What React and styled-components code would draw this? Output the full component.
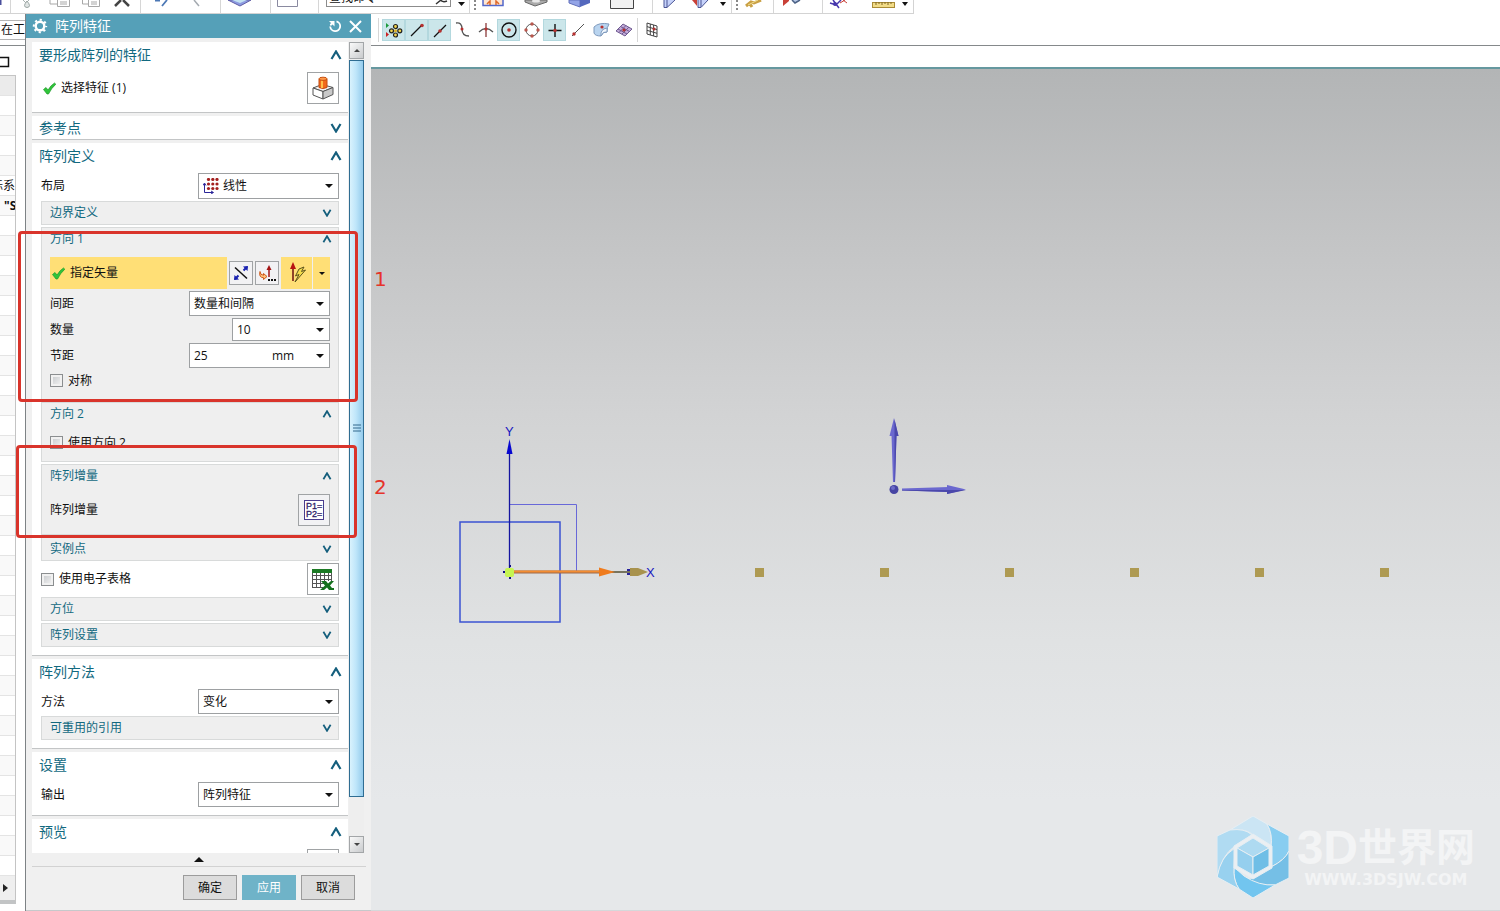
import React, { useState } from 'react';
import styled, { createGlobalStyle } from 'styled-components';

const GlobalStyle = createGlobalStyle`
  * {
    box-sizing: border-box;
  }

  body {
    margin: 0;
    background: #fff;
    color: #111;
    font-family: 'Open Sans', 'Noto Sans CJK SC', sans-serif;
    font-size: 12px;
    line-height: 16px;
  }

  button, input, select {
    font: inherit;
    color: inherit;
    padding: 0;
    margin: 0;
    border: 0;
    background: none;
  }

  svg {
    display: block;
    flex: none;
  }
`;

const Page = styled.div`
  position: relative;
  display: flex;
  flex-direction: column;
  height: 100vh;
  overflow: hidden;
`;

const TopStrip = styled.div`
  display: flex;
  align-self: flex-start;
  height: 14px;
  overflow: hidden;
  border-bottom: 1px solid #d3d3d3;
  border-right: 1px solid #d3d3d3;
`;

const StripButton = styled.button`
  display: block;
  width: ${(p) => p.$w}px;
  height: 13px;
`;

const Separator = styled.span`
  flex: none;
  width: 1px;
  background: #d6d6d6;
`;

const CommandSearch = styled.label`
  display: flex;
  align-items: flex-end;
  width: 125px;
  height: 7px;
  margin-left: 7px;
  border: 1px solid #8c8c8c;
  border-top: 0;
  overflow: hidden;

  input {
    width: 108px;
    height: 16px;
    padding-left: 2px;
    outline: none;
  }
`;

const Main = styled.div`
  display: flex;
  flex: 1;
  min-height: 0;
`;

const Navigator = styled.aside`
  display: flex;
  flex-direction: column;
  flex: none;
  width: 26px;
  border-right: 1px solid #7d8285;
  overflow: hidden;
`;

const FilterBar = styled.div`
  display: flex;
  align-items: center;
  flex: none;
  height: 32px;
  border-bottom: 1px solid #85898b;
`;

const FilterField = styled.div`
  display: flex;
  justify-content: flex-end;
  width: 100%;
  height: 20px;
  border: 1px solid #b4b4b4;
  border-width: 1px 0;
  line-height: 18px;
  white-space: nowrap;
`;

const PinRow = styled.div`
  display: flex;
  align-items: center;
  flex: none;
  height: 29px;
  padding-top: 2px;
`;

const Tree = styled.div`
  display: flex;
  flex-direction: column;
  flex: 1;
  width: 16px;
  min-height: 0;
  margin-bottom: 7px;
  border: 1px solid #c4c4c4;
  border-left: 0;
  border-bottom: 4px solid #c2c4c5;
`;

const TreeRows = styled.div`
  flex: 1;
  min-height: 0;
  overflow: hidden;
`;

const TreeRow = styled.div`
  display: flex;
  align-items: center;
  justify-content: ${(p) => (p.$bold ? 'flex-start' : 'flex-end')};
  height: 20px;
  padding-left: ${(p) => (p.$bold ? 4 : 0)}px;
  border-bottom: 1px solid #e4e4e4;
  background: ${(p) => (p.$head ? '#ebebeb' : '#fff')};
  font-weight: ${(p) => (p.$bold ? 700 : 400)};
  white-space: nowrap;
  overflow: hidden;

  &:nth-child(odd) {
    background: ${(p) => (p.$head ? '#ebebeb' : '#f9f9f9')};
  }
`;

const TreeScroll = styled.button`
  display: flex;
  align-items: center;
  height: 24px;
  padding-left: 3px;
  background: #efefef;
`;

const Dialog = styled.section`
  display: flex;
  flex-direction: column;
  flex: none;
  width: 345px;
  background: #f0f0f0;
  border-bottom: 1px solid #c6c9cb;
`;

const TitleBar = styled.header`
  display: flex;
  align-items: center;
  flex: none;
  height: 24px;
  padding: 0 9px 0 6px;
  gap: 7px;
  background: #55a0b8;
  color: #fff;
`;

const Title = styled.h1`
  flex: 1;
  margin: 0;
  font-size: 14px;
  font-weight: 400;
  line-height: 20px;
`;

const DialogBody = styled.div`
  display: flex;
  flex: 1;
  min-height: 0;
  padding: 4px 7px 0 6px;
  gap: 1px;
`;

const Panels = styled.div`
  display: flex;
  flex-direction: column;
  gap: 3px;
  flex: 1;
  overflow: hidden;
`;

const PanelBox = styled.section`
  flex: none;
  background: #fff;
  border-bottom: 1px solid #c3c5c6;
`;

const PanelHeader = styled.button`
  display: flex;
  align-items: center;
  justify-content: space-between;
  width: 100%;
  height: ${(p) => (p.$open ? 26 : 23)}px;
  padding: 0 6px 0 7px;
  color: #12697f;
  font-size: 14px;
  line-height: 20px;
`;

const PanelContent = styled.div`
  display: flex;
  flex-direction: column;
  gap: 2px;
  padding: 4px 9px 8px;
`;

const GroupBox = styled.section`
  background: #efefef;
  border: 1px solid #d8dada;
`;

const GroupHeader = styled.button`
  display: flex;
  align-items: center;
  justify-content: space-between;
  width: 100%;
  height: 22px;
  padding: 0 6px 0 8px;
  color: #12697f;
`;

const GroupContent = styled.div`
  display: flex;
  flex-direction: column;
  gap: 2px;
  padding: 7px 8px 8px;
`;

const Row = styled.div`
  display: flex;
  align-items: center;
  justify-content: space-between;
`;

const Combo = styled.div`
  display: flex;
  align-items: center;
  width: ${(p) => (p.$narrow ? 98 : 141)}px;
  height: ${(p) => p.$h || 25}px;
  padding: 0 5px 0 4px;
  border: 1px solid #9da0a2;
  background: #fff;

  select, input {
    flex: 1;
    width: 20px;
    min-width: 0;
    height: 100%;
    appearance: none;
    outline: none;
  }
`;

const ComboIcon = styled.span`
  margin-right: 4px;
`;

const Unit = styled.span`
  width: 44px;
`;

const CheckLabel = styled.label`
  display: flex;
  align-items: center;
  gap: 5px;
  height: 21px;
`;

const CheckBox = styled.input`
  appearance: none;
  width: 13px;
  height: 13px;
  margin: 0;
  border: 1px solid #8b8e90;
  background: linear-gradient(135deg, #c4c7ca, #f6f6f6);
  box-shadow: inset 0 0 0 2px #f1f1f1;

  &:checked {
    background: #12697f;
  }
`;

const Status = styled.span`
  display: flex;
  align-items: center;
  gap: 5px;
  padding-left: 2px;
`;

const SquareButton = styled.button`
  display: flex;
  align-items: center;
  justify-content: center;
  width: ${(p) => p.$size}px;
  height: ${(p) => p.$size}px;
  border: 1px solid #a0a3a5;
  background: ${(p) => (p.$size === 32 && !p.$plain ? '#fff' : '#f2f2f4')};
`;

const VectorRow = styled.div`
  display: flex;
  align-items: center;
  gap: 2px;
  height: 32px;
`;

const VectorLabel = styled(Status)`
  flex: 1;
  height: 100%;
  background: #ffdf76;
`;

const VectorType = styled.button`
  display: flex;
  align-items: center;
  justify-content: center;
  width: ${(p) => p.$w}px;
  height: 100%;
  background: #ffdf76;
`;

const SplitButton = styled.div`
  display: flex;
  gap: 1px;
  height: 100%;
`;

const ScrollBar = styled.div`
  display: flex;
  flex-direction: column;
  flex: none;
  width: 15px;
  background: #eee;
`;

const ScrollButton = styled.button`
  display: flex;
  align-items: center;
  justify-content: center;
  height: 17px;
  border: 1px solid #a3a6a8;
  background: linear-gradient(135deg, #fafafa, #c9cbcd);
`;

const ScrollTrack = styled.div`
  flex: 1;
  margin-top: 1px;
`;

const ScrollThumb = styled.div`
  display: flex;
  align-items: center;
  justify-content: center;
  height: 95%;
  border: 1px solid #2f6d92;
  background: linear-gradient(90deg, #d9f2fd, #bfe6fa 45%, #94cbec);
`;

const CollapseBar = styled.button`
  display: flex;
  align-items: center;
  justify-content: center;
  height: 14px;
  margin: 0 5px 0 6px;
  border-bottom: 1px solid #d2d2d2;
`;

const Footer = styled.footer`
  display: flex;
  justify-content: flex-end;
  gap: 5px;
  padding: 8px 16px 10px;
`;

const ActionButton = styled.button`
  width: 54px;
  height: 25px;
  border: 1px solid ${(p) => (p.$primary ? '#6fb3c8' : '#9c9c9c')};
  background: ${(p) => (p.$primary ? '#6fb3c8' : '#dcdcdc')};
  color: ${(p) => (p.$primary ? '#fff' : '#111')};
`;

const Workspace = styled.main`
  display: flex;
  flex-direction: column;
  flex: 1;
  min-width: 0;
`;

const SnapBar = styled.div`
  display: flex;
  align-items: center;
  flex: none;
  height: 32px;
  padding-left: 7px;
  border-bottom: 1px solid #85898b;

  ${Separator} {
    height: 24px;
  }
`;

const SnapGroup = styled.div`
  display: flex;
  margin: 0 2px 0 3px;
`;

const SnapButton = styled.button`
  display: flex;
  align-items: center;
  justify-content: center;
  width: 23px;
  height: 22px;
  border: 1px solid ${(p) => (p.$active ? '#b3d8de' : 'transparent')};
  background: ${(p) => (p.$active ? '#cbe6ea' : 'none')};

  ${Separator} + & {
    margin-left: 2px;
  }
`;

const Viewport = styled.div`
  position: relative;
  flex: 1;
  min-height: 0;
  margin-top: 21px;
  border-top: 2px solid #66989f;
  border-bottom: 1px solid #d5d8da;
  background: linear-gradient(#b3b5b6, #c3c4c5 20%, #d2d3d4 41%, #e0e2e3 68%, #e6e8ea 87%);
`;

const Scene = styled.svg`
  width: 100%;
  height: 100%;
  font-family: 'Liberation Sans', sans-serif;
  font-size: 13px;
`;

const Watermark = styled.div`
  position: absolute;
  right: 25px;
  bottom: 12px;
  display: flex;
  align-items: center;
  gap: 8px;
  color: #f3f4f5;
`;

const Brand = styled.div`
  display: flex;
  align-items: center;
  height: 48px;
  font-family: 'Liberation Sans', 'Noto Sans CJK SC', sans-serif;
  font-size: 48px;
  font-weight: 700;
  line-height: 48px;

  span {
    font-size: 39px;
  }
`;

const Site = styled.div`
  padding-bottom: 2px;
  font-family: 'DejaVu Sans', sans-serif;
  font-size: 16px;
  font-weight: 700;
  line-height: 16px;
  text-align: center;
`;

const Callout = styled.div`
  position: absolute;
  left: ${(p) => p.$x}px;
  top: ${(p) => p.$y}px;
  width: ${(p) => p.$w}px;
  height: ${(p) => p.$h}px;
  border: 3px solid #d9342b;
  border-radius: 4px;
  pointer-events: none;
`;

const CalloutNumber = styled.span`
  position: absolute;
  left: 374px;
  top: ${(p) => p.$y}px;
  color: #e5332a;
  font-family: 'DejaVu Sans', sans-serif;
  font-size: 20px;
  line-height: 24px;
`;

const Chevron = ({ open, small }) => (
  <svg width={small ? 10 : 12} height={small ? 8 : 10} viewBox="0 0 12 10">
    <path d={open ? 'M1.5 9 L6 1.5 L10.5 9' : 'M1.5 1 L6 8.5 L10.5 1'} fill="none" stroke="#155f7d" strokeWidth="2.2" />
  </svg>
);

const Arrow = ({ w = 8, dir = 'down', color = '#111' }) => {
  const shapes = { down: '0,0 8,0 4,4', up: '0,4 8,4 4,0' };
  return (
    <svg width={w} height={w / 2} viewBox="0 0 8 4">
      <polygon points={shapes[dir]} fill={color} />
    </svg>
  );
};

const CheckMark = () => (
  <svg width="13" height="13" viewBox="0 0 13 13">
    <path d="M0.5 7.5 L3 5.5 L5 8 Q8 3 11.5 1 L12.8 2.2 Q8.5 6 5.5 12 L4 12 Z" fill="#2fc53a" stroke="#1f9a2a" strokeWidth="0.7" />
  </svg>
);

const GearIcon = () => (
  <svg width="16" height="16" viewBox="0 0 16 16" fill="none" stroke="#fff">
    <circle cx="8" cy="8" r="4.3" strokeWidth="2.4" />
    <circle cx="8" cy="8" r="6.2" strokeWidth="2" strokeDasharray="2.2 2.67" strokeDashoffset="1.1" />
  </svg>
);

const ResetIcon = () => (
  <svg width="14" height="14" viewBox="0 0 14 14">
    <path d="M8.5 2.3 A5 5 0 1 1 2.2 7.5" fill="none" stroke="#fff" strokeWidth="1.8" />
    <path d="M1 2 H6.5 V7.5 L4.6 5.5 L2.8 7 L1.800 5.500 L3 4 Z" fill="#fff" />
  </svg>
);

const CloseIcon = () => (
  <svg width="13" height="13" viewBox="0 0 13 13" stroke="#fff" strokeWidth="2">
    <path d="M1 1 L12 12 M12 1 L1 12" />
  </svg>
);

const FeatureIcon = () => (
  <svg width="22" height="24" viewBox="0 0 22 24">
    <g stroke="#555" strokeLinejoin="round">
      <path d="M1 12 L10 8.5 L21 11.5 L11 15.5 Z" fill="#f2f2f2" />
      <path d="M1 12 L11 15.5 V23 L1 19 Z" fill="#fff" />
      <path d="M21 11.5 L11 15.5 V23 L21 18.5 Z" fill="#c9c9c9" />
    </g>
    <path d="M7 3 V11.5 Q11 13.5 15 11.5 V3 Z" fill="#f26a1c" stroke="#c44a10" />
    <path d="M9 4 V12 H11 V4 Z" fill="#ffc04a" />
    <ellipse cx="11" cy="2.8" rx="4" ry="1.6" fill="#ff9b4d" stroke="#c8500e" />
  </svg>
);

const GridIcon = () => (
  <svg width="16" height="16" viewBox="0 0 16 16">
    {[1.5, 6, 10.5].map((y) => [5.5, 9.8, 14].map((x) => <circle key={`${x}-${y}`} cx={x} cy={y} r="1.6" fill="#a3201f" />))}
    <path d="M1.5 6 V14.5 H10 M0 7.5 L1.5 5 L3 7.5 M8 13 L10.5 14.5 L8 16" fill="none" stroke="#2a2599" />
  </svg>
);

const ReverseIcon = () => (
  <svg width="16" height="16" viewBox="0 0 16 16">
    <path d="M2 2.5 L14 13.5" stroke="#111" strokeWidth="1.5" />
    <path d="M2 14 L5.5 10.5 M10.5 5.5 L14 2" stroke="#1a22b0" strokeWidth="2" />
    <path d="M15 1 L14.5 6 L10 1.5 Z M1 15 L1.5 10 L6 14.5 Z" fill="#1a22b0" />
  </svg>
);

const VectorDialogIcon = () => (
  <svg width="18" height="18" viewBox="0 0 18 18">
    <path d="M11 13 V5" stroke="#a31414" strokeWidth="1.5" />
    <path d="M8.5 6 L11 1 L13.5 6 Z" fill="#a31414" />
    <path d="M2 7.5 Q2 11 5.5 11.3 V9.5 L9 12.5 L5.5 15.5 V13.7 Q0.5 13.5 2 7.5 Z" fill="#ffc27b" stroke="#cf5a1a" />
    <path d="M10 16 h2 M13 16 h2 M16 16 h2" stroke="#111" strokeWidth="2" />
  </svg>
);

const InferredVectorIcon = () => (
  <svg width="20" height="24" viewBox="0 0 20 24">
    <path d="M6 20 V6" stroke="#6b1010" strokeWidth="1.5" />
    <path d="M3 8 L6 1 L9 8 Z" fill="#b81212" />
    <path d="M12 8 L17 6 L14.5 10.5 L18.5 9 L8 21 L12 13.5 L8.5 15 Z" fill="#f3dc4b" stroke="#5d541c" />
  </svg>
);

const ParameterIcon = () => (
  <svg width="20" height="20" viewBox="0 0 20 20" fontFamily="Liberation Sans, sans-serif" fontSize="9">
    <rect x="0.5" y="0.5" width="19" height="19" fill="#fff" stroke="#4a3c8e" />
    <text x="2" y="9" fill="#2d2168" stroke="#2d2168" strokeWidth="0.3">P1=</text>
    <text x="2" y="17" fill="#2d2168" stroke="#2d2168" strokeWidth="0.3">P2=</text>
  </svg>
);

const SheetIcon = () => (
  <svg width="24" height="24" viewBox="0 0 24 24">
    <rect x="1" y="2" width="20" height="19" fill="#fff" />
    <path d="M1.5 3 V21 M5.5 3 V21 M9.5 3 V21 M13.5 3 V16 M17.5 3 V14 M20.5 3 V14 M1 8.5 H21 M1 12.5 H21 M1 16.5 H13 M1 20.5 H12" stroke="#555" fill="none" />
    <rect x="1" y="2" width="20" height="4" fill="#1c7a25" />
    <path d="M10 14 H15 L17 16.5 L20 14 H23 L19 18.5 L21 21 H23 V23 H18 L16 20.5 L13 23 H9 L14 18.5 Z" fill="#15701e" />
  </svg>
);

const Panel = ({ title, open: initial = true, children }) => {
  const [open, setOpen] = useState(initial);
  return (
    <PanelBox>
      <PanelHeader $open={open} aria-expanded={open} onClick={() => setOpen(!open)}>
        {title}
        <Chevron open={open} />
      </PanelHeader>
      {open && children && <PanelContent>{children}</PanelContent>}
    </PanelBox>
  );
};

const Group = ({ title, open: initial = false, children }) => {
  const [open, setOpen] = useState(initial);
  return (
    <GroupBox>
      <GroupHeader aria-expanded={open} onClick={() => setOpen(!open)}>
        {title}
        <Chevron open={open} small />
      </GroupHeader>
      {open && children && <GroupContent>{children}</GroupContent>}
    </GroupBox>
  );
};

const SelectRow = ({ id, label, value, icon }) => (
  <Row>
    <label htmlFor={id}>{label}</label>
    <Combo $h={icon ? 26 : 25}>
      {icon && <ComboIcon>{icon}</ComboIcon>}
      <select id={id} defaultValue={value}>
        <option>{value}</option>
      </select>
      <Arrow />
    </Combo>
  </Row>
);

const InputRow = ({ id, label, value, unit }) => (
  <Row>
    <label htmlFor={id}>{label}</label>
    <Combo $narrow={!unit} $h={unit ? 25 : 23}>
      <input id={id} defaultValue={value} />
      {unit && <Unit>{unit}</Unit>}
      <Arrow />
    </Combo>
  </Row>
);

const Check = ({ label }) => (
  <CheckLabel>
    <CheckBox type="checkbox" />
    {label}
  </CheckLabel>
);

// Lower halves of the main toolbar icons; "sep" draws a divider.
const stripItems = [
  { w: 10, art: <path d="M0.5 0 V5" stroke="#4a4f9c" strokeWidth="2" /> },
  'sep',
  { w: 34, art: <><path d="M12 0 L15 3 L18 0" fill="none" stroke="#a9b3b1" /><path d="M16 1 Q11 7 16 7.5 Q21 7 16 1" fill="#e1e6e5" stroke="#9aa5a2" /></> },
  { w: 32, art: <path d="M5 0 V4 H12 M12.5 0 V6.5 H24.5 V0 M15 2 H22 M15 4 H22" fill="none" stroke="#a7a7a7" /> },
  { w: 32, art: <path d="M5.5 0 V4 H11 M11.5 0 V6.5 H22.5 V0 M14 2 H20 M14 4 H20" fill="none" stroke="#a7a7a7" /> },
  { w: 31, art: <path d="M6 6 L12 0 M14 0 L20 6" stroke="#444" strokeWidth="2.5" /> },
  'sep',
  { w: 40, art: <path d="M26 0 L21 6 M14 0.5 H19" stroke="#4c78b5" strokeWidth="1.8" /> },
  { w: 39, art: <path d="M13 0 L18 6" stroke="#a4aab0" strokeWidth="1.5" /> },
  'sep',
  { w: 49, art: <><path d="M7 0 L19 6 L30 0 Z" fill="#8c9be0" stroke="#5f5da5" /><path d="M11 0 L19 3 L26 0 Z" fill="#c3e2f2" /></> },
  'sep',
  { w: 47, art: <path d="M6.5 0 V6.5 H26.5 V0" fill="#fff" stroke="#8a8aa0" /> },
  'sep',
];

const stripMore = [
  { w: 18, art: <polygon points="7,2 14,2 10.5,6" fill="#111" /> },
  'sep',
  { w: 47, art: <><path d="M5 0 V10" stroke="#888" strokeWidth="2" strokeDasharray="2 2" /><path d="M13 0 V5.5 H33 V0" fill="#ffe6d2" stroke="#5368cb" strokeWidth="1.5" /><path d="M17 4 L20 1 V5 M29 4 L26 1 V5" fill="none" stroke="#df6a2b" strokeWidth="1.5" /></> },
  { w: 45, art: <><path d="M8 0 V2 L18 6 L30 2 V0 Z" fill="#aaa" stroke="#666" /><ellipse cx="19" cy="1" rx="4" ry="1.5" fill="#e8e8e8" /></> },
  { w: 44, art: <><path d="M7 0 V3 L18 7 V0 Z" fill="#93a4e7" stroke="#6270bc" /><path d="M18 7 L28 3 V0 H18 Z" fill="#5468bd" /></> },
  { w: 46, art: <path d="M4.5 0 V8.5 H27.5 V0" fill="#f1f1f1" stroke="#444" /> },
  'sep',
  { w: 31, art: <path d="M11 0 V7.5 H14 L22 0 M14 0 V7" fill="#c6d2fa" stroke="#4b5594" /> },
  { w: 29, art: <><path d="M14 0 V7.5 H17 L24 0 M17 0 V7" fill="#c6d2fa" stroke="#4b5594" /><path d="M8 0 L13 0 L13 6 Z" fill="#c94037" /></> },
  { w: 18, art: <polygon points="7,2 13,2 10,6" fill="#111" /> },
  'sep',
  { w: 41, art: <><path d="M5 0 V10" stroke="#888" strokeWidth="2" strokeDasharray="2 2" /><path d="M14 6 L19 2 L22 3 L29 0 M18 4 L20 7" fill="none" stroke="#c9a044" strokeWidth="3" /><path d="M16 5 L26 0" stroke="#f2df92" /></> },
  'sep',
  { w: 48, art: <><path d="M9 0 V6 L15 1 V0 Z" fill="#c94037" /><path d="M18 0 L21 3 L26 0" fill="#b8c9e8" stroke="#4c6285" strokeWidth="1.5" /></> },
  'sep',
  { w: 46, art: <><path d="M7 3 L13 5 L18 0 M10 0 L16 8" fill="none" stroke="#4737ad" strokeWidth="1.5" /><path d="M17 3 L22 0 M20 0 L24 3" stroke="#c94037" /><circle cx="12" cy="4" r="2" fill="#4737ad" /></> },
  { w: 30, art: <><rect x="3.5" y="2.5" width="22" height="5" fill="#f2dc87" stroke="#aa8b35" /><path d="M7 2 V5 M10 2 V4 M13 2 V5 M16 2 V4 M19 2 V5 M22 2 V4" stroke="#806722" /></> },
  { w: 14, art: <polygon points="3,2 9,2 6,6" fill="#111" /> },
];

const Strip = ({ items }) => items.map((item, i) => (
  item === 'sep' ? <Separator key={i} /> : (
    <StripButton key={i} $w={item.w}>
      <svg width={item.w} height="13">{item.art}</svg>
    </StripButton>
  )
));

const red = '#b5302f';

const snapIcons = [
  {
    active: true,
    art: (
      <>
        <path d="M1 2 L4 4.5 L1 7 Z" fill="#1c9a3c" />
        <path d="M1 11 L4 13.5 L1 16 Z" fill="#c22" />
        <g fill="#f3d54c" stroke="#222" strokeWidth="1.2">
          <circle cx="10.5" cy="5.5" r="2" />
          <circle cx="10.5" cy="14" r="2" />
          <circle cx="6.5" cy="9.8" r="2" />
          <circle cx="14.8" cy="9.8" r="2" />
        </g>
        <circle cx="10.5" cy="9.8" r="1.5" fill="#d8ad24" />
      </>
    ),
  },
  { active: true, art: <><path d="M3 15 L14 4" stroke="#111" strokeWidth="1.3" /><circle cx="14" cy="4.5" r="1.8" fill={red} /></> },
  { active: true, art: <><path d="M3 16 L15 4" stroke="#111" strokeWidth="1.3" /><circle cx="9" cy="10" r="1.8" fill={red} /></> },
  { art: <><path d="M2 2 Q8 1 8 8 Q8 15 15 15" fill="none" stroke="#555" strokeWidth="1.3" /><circle cx="8" cy="8" r="1.5" fill={red} /></> },
  { art: <><path d="M2 11 Q9 4 16 11" fill="none" stroke="#555" strokeWidth="1.3" /><path d="M9 2 V16" stroke="#8a3b3b" strokeWidth="1.3" /><circle cx="9" cy="8" r="1.6" fill={red} /></> },
  { active: true, art: <><circle cx="9" cy="9" r="7" fill="none" stroke="#111" strokeWidth="1.4" /><circle cx="9" cy="9" r="1.8" fill={red} /></> },
  { art: <><circle cx="9" cy="9" r="6" fill="none" stroke="#555" /><g fill="#b9574d"><circle cx="9" cy="3" r="1.7" /><circle cx="9" cy="15" r="1.7" /><circle cx="3" cy="9" r="1.7" /><circle cx="15" cy="9" r="1.7" /></g></> },
  { active: true, art: <><path d="M9 3 V16 M2.5 9.5 H15.5" stroke="#111" strokeWidth="1.4" /><circle cx="9" cy="9.5" r="1.7" fill={red} /></> },
  { art: <><path d="M3 15 L15 3" stroke="#555" /><circle cx="5" cy="13" r="1.7" fill={red} /></> },
  { art: <><path d="M2 6 Q7 1 17 3 Q15 6 15 11 Q11 10 9 15 Q3 15 2 12 Z" fill="#b9d4ef" stroke="#7f9abd" /><path d="M9 15 Q8 8 15 7 V11 Q11 10 9 15 Z" fill="#eef5fc" stroke="#7f9abd" /><circle cx="10" cy="6" r="1.6" fill={red} /></> },
  { art: <><path d="M1 10 L8 3 L17 8 L10 15 Z" fill="#c2abd9" stroke="#6f5a90" /><path d="M4 11.5 L11 4.5 M7 13 L14 6 M3 8 L12 13 M5.5 5.5 L14.5 10.5" stroke="#6f5a90" /><circle cx="9" cy="9" r="1.6" fill={red} /></> },
];

const SnapIcon = ({ children }) => (
  <svg width="18" height="18" viewBox="0 0 18 18">{children}</svg>
);

const HexLogo = () => (
  <svg width="72" height="82" viewBox="0 0 72 82" stroke="#e6eef3">
    <path d="M36 0 L13 14 Q30 12 37 20 L54 31 Q56 18 50 8 Z" fill="#cbe5f4" />
    <path d="M50 8 L72 20 V35 Q68 44 54 51 V31 Q56 18 50 8 Z" fill="#88cdf0" />
    <path d="M72 35 V62 L58 69 Q42 70 27 63 L36 62 L54 51 Q68 44 72 35 Z" fill="#75bfe6" />
    <path d="M58 69 L36 82 L22 73 Q16 64 17 51 L27 60 Q42 70 58 69 Z" fill="#72c5ef" />
    <path d="M22 73 L0 61 Q2 42 18 32 L17 51 Q16 64 22 73 Z" fill="#98d1ef" />
    <path d="M0 61 V20 L13 14 Q28 12 35 19 L18 30 Q4 40 0 61 Z" fill="#b0dbf2" />
    <path d="M36 18 L55 30 V52 L36 63 L17 52 V30 Z" fill="#ebeff2" />
    <path d="M36 22 L52 32 L36 41 L20 32 Z" fill="#aedaf1" />
    <path d="M20 32 L36 41 V59 L20 50 Z" fill="#95cfee" />
    <path d="M52 32 L36 41 V59 L52 50 Z" fill="#6fbee6" />
  </svg>
);

const patternPoints = [388, 513, 638, 763, 888, 1013];

const Drawing = () => (
  <Scene>
    <rect x="89" y="453" width="100" height="100" fill="none" stroke="#3b53d2" strokeWidth="1.5" />
    <path d="M138.5 435.5 H205.5 V502" fill="none" stroke="#6868d8" />
    <path d="M138.5 503 V384" stroke="#1515a0" strokeWidth="1.3" />
    <path d="M135.5 385 L138.5 370 L141.5 385 Z" fill="#0808d0" />
    <text x="134" y="367" fill="#1818c0">Y</text>
    <path d="M226 503 H262" stroke="#77745e" strokeWidth="2" />
    <path d="M143 503 H230" stroke="#9c6a4c" strokeWidth="3" />
    <path d="M143 502.5 H230" stroke="#f48d32" strokeWidth="2" />
    <path d="M228 498.5 L244 503 L228 507.500 Z" fill="#ef7b1d" />
    <path d="M256 501 h3 M256 505 h3" stroke="#26219b" strokeWidth="2" />
    <path d="M259 499 H267 L277 503 L267 507 H259 Z" fill="#a8924d" />
    <text x="275" y="508" fill="#1818c0">X</text>
    <path d="M132 503 h2 M138 497 h2 M138 509 h2" stroke="#0e0e80" strokeWidth="2" />
    <rect x="134" y="499" width="9" height="9" rx="2" fill="#c5f553" />
    {patternPoints.map((x) => (
      <rect key={x} x={x - 4} y="499" width="9" height="9" fill="#ae9a52" />
    ))}
    <g fill="#6b68cf">
      <path d="M520.5 366 H525.5 L524 413 H522 Z" />
      <path d="M518.5 367 L523 349 L527.5 367 Z" />
      <path d="M531 419.5 L578 418 V423 L531 421.5 Z" />
      <path d="M576 416 L595 420.5 L576 425 Z" />
    </g>
    <path d="M523.5 350 L527.5 367 H525.5 L524 413 H523.5 Z M531 421 L576 421 H595 L576 425 V423 L531 421.5 Z" fill="#4b48ab" />
    <circle cx="523" cy="420.5" r="4.5" fill="#4644a3" />
    <circle cx="522" cy="419" r="2" fill="#6d6bc8" />
  </Scene>
);

const treeRows = Array.from({ length: 41 }, (_, i) => ({
  head: i === 0,
  text: i === 5 ? '标系' : i === 6 ? '"S' : '',
  bold: i === 6,
}));

const App = () => (
  <Page>
    <GlobalStyle />
    <TopStrip>
      <Strip items={stripItems} />
      <CommandSearch>
        <input aria-label="查找命令" defaultValue="查找命令" />
        <svg width="14" height="7" viewBox="0 0 14 7">
          <path d="M1 5 L6 1 M5 0 Q7 4 12 2" fill="none" stroke="#333" strokeWidth="1.5" />
        </svg>
      </CommandSearch>
      <Strip items={stripMore} />
    </TopStrip>
    <Main>
      <Navigator>
        <FilterBar>
          <FilterField>在工</FilterField>
        </FilterBar>
        <PinRow>
          <svg width="10" height="12">
            <path d="M0 1.5 H8.5 V10.5 H0" fill="none" stroke="#111" strokeWidth="1.5" />
          </svg>
        </PinRow>
        <Tree>
          <TreeRows>
            {treeRows.map((row, i) => (
              <TreeRow key={i} $head={row.head} $bold={row.bold}>{row.text}</TreeRow>
            ))}
          </TreeRows>
          <TreeScroll aria-label="scroll">
            <svg width="5" height="8">
              <path d="M0 0 L5 4 L0 8 Z" fill="#222" />
            </svg>
          </TreeScroll>
        </Tree>
      </Navigator>

      <Dialog>
        <TitleBar>
          <GearIcon />
          <Title>阵列特征</Title>
          <button aria-label="reset"><ResetIcon /></button>
          <button aria-label="close"><CloseIcon /></button>
        </TitleBar>
        <DialogBody>
          <Panels>
            <Panel title="要形成阵列的特征">
              <Row>
                <Status>
                  <CheckMark />
                  选择特征 (1)
                </Status>
                <SquareButton $size={32}><FeatureIcon /></SquareButton>
              </Row>
            </Panel>
            <Panel title="参考点" open={false} />
            <Panel title="阵列定义">
              <SelectRow id="layout" label="布局" value="线性" icon={<GridIcon />} />
              <Group title="边界定义" />
              <Group title="方向 1" open>
                <VectorRow>
                  <VectorLabel>
                    <CheckMark />
                    指定矢量
                  </VectorLabel>
                  <SquareButton $size={24}><ReverseIcon /></SquareButton>
                  <SquareButton $size={24}><VectorDialogIcon /></SquareButton>
                  <SplitButton>
                    <VectorType $w={31}><InferredVectorIcon /></VectorType>
                    <VectorType $w={17}><Arrow w={6} /></VectorType>
                  </SplitButton>
                </VectorRow>
                <SelectRow id="spacing" label="间距" value="数量和间隔" />
                <InputRow id="count" label="数量" value="10" />
                <InputRow id="pitch" label="节距" value="25" unit="mm" />
                <Check label="对称" />
              </Group>
              <Group title="方向 2" open>
                <Check label="使用方向 2" />
              </Group>
              <Group title="阵列增量" open>
                <Row>
                  阵列增量
                  <SquareButton $size={32} $plain><ParameterIcon /></SquareButton>
                </Row>
              </Group>
              <Group title="实例点" />
              <Row>
                <Check label="使用电子表格" />
                <SquareButton $size={32}><SheetIcon /></SquareButton>
              </Row>
              <Group title="方位" />
              <Group title="阵列设置" />
            </Panel>
            <Panel title="阵列方法">
              <SelectRow id="method" label="方法" value="变化" />
              <Group title="可重用的引用" />
            </Panel>
            <Panel title="设置">
              <SelectRow id="output" label="输出" value="阵列特征" />
            </Panel>
            <Panel title="预览">
              <Row>
                <span />
                <SquareButton $size={32} />
              </Row>
            </Panel>
          </Panels>
          <ScrollBar>
            <ScrollButton aria-label="up"><Arrow w={6} dir="up" color="#444" /></ScrollButton>
            <ScrollTrack>
              <ScrollThumb>
                <svg width="8" height="9">
                  <path d="M0 1 H8 M0 4 H8 M0 7 H8" stroke="#32688c" />
                </svg>
              </ScrollThumb>
            </ScrollTrack>
            <ScrollButton aria-label="down"><Arrow w={6} color="#444" /></ScrollButton>
          </ScrollBar>
        </DialogBody>
        <CollapseBar aria-label="collapse"><Arrow w={10} dir="up" /></CollapseBar>
        <Footer>
          <ActionButton>确定</ActionButton>
          <ActionButton $primary>应用</ActionButton>
          <ActionButton>取消</ActionButton>
        </Footer>
      </Dialog>

      <Workspace>
        <SnapBar>
          <Separator />
          <SnapGroup>
            {snapIcons.map((icon, i) => (
              <SnapButton key={i} $active={icon.active} aria-pressed={!!icon.active}>
                <SnapIcon>{icon.art}</SnapIcon>
              </SnapButton>
            ))}
          </SnapGroup>
          <Separator />
          <SnapButton>
            <SnapIcon>
              <path d="M4 2 L14 5 V16 L4 13 Z M7.3 3 V14 M10.6 4 V15 M4 5.6 L14 8.6 M4 9.3 L14 12.3" fill="none" stroke="#444" />
              <circle cx="11" cy="8" r="1.5" fill={red} />
            </SnapIcon>
          </SnapButton>
        </SnapBar>
        <Viewport>
          <Drawing />
          <Watermark>
            <HexLogo />
            <div>
              <Brand>3D<span>世界网</span></Brand>
              <Site>WWW.3DSJW.COM</Site>
            </div>
          </Watermark>
        </Viewport>
      </Workspace>
    </Main>

    <Callout $x={18} $y={231} $w={340} $h={171} />
    <CalloutNumber $y={267}>1</CalloutNumber>
    <Callout $x={16} $y={445} $w={341} $h={93} />
    <CalloutNumber $y={475}>2</CalloutNumber>
  </Page>
);

export default App;
